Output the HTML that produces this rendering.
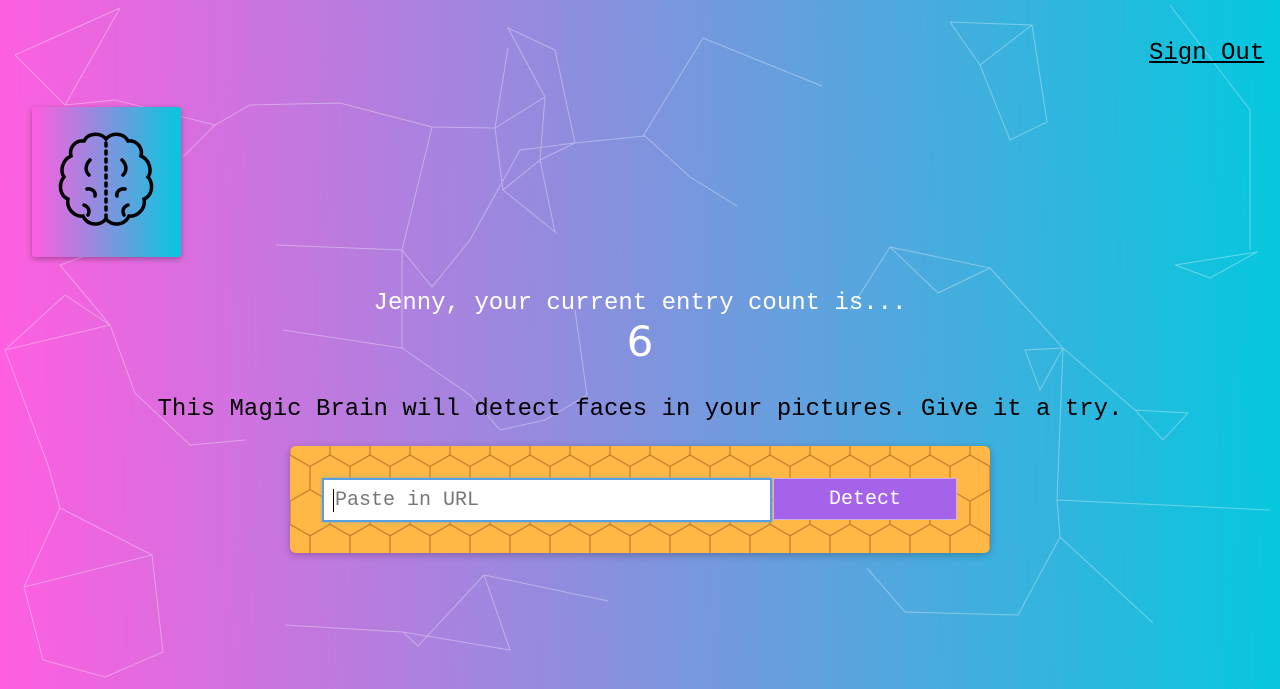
<!DOCTYPE html>
<html><head><meta charset="utf-8"><style>
body{margin:0;width:1280px;height:689px;overflow:hidden;background:linear-gradient(89deg,#ff5edf 0%,#04c8de 100%);font-family:"Liberation Mono",monospace;position:relative}
.net{position:absolute;left:0;top:0}
.so{position:absolute;left:1149px;top:40px;font-size:24px;color:#000;text-decoration:underline}
.logo{position:absolute;left:32px;top:107px;width:149px;height:150px;border-radius:3px;background:linear-gradient(90deg,#ff5edf,#04c8de);box-shadow:0 2px 6px rgba(0,0,0,.3)}
.t1{position:absolute;left:0;width:1280px;text-align:center;top:290px;font-size:24px;color:#fff}
.n{position:absolute;left:0;width:1280px;text-align:center;top:317px;font-size:42px;color:#fff;font-family:"DejaVu Sans",sans-serif}
.t2{position:absolute;left:0;width:1280px;text-align:center;top:396px;font-size:24px;color:#000}
.box{position:absolute;left:290px;top:446px;width:700px;height:107px;border-radius:6px;overflow:hidden;background:#ffb845;box-shadow:0 2px 8px rgba(0,0,0,.25)}
.in{position:absolute;left:322px;top:478px;width:446px;height:40px;background:#fff;border:2px solid #5b9ee0;box-shadow:0 0 3px #7ab}
.in span{position:absolute;left:9px;top:9px;font-size:20px;color:#777;border-left:1px solid #000;padding-left:1px}
.btn{position:absolute;left:773px;top:478px;width:184px;height:42px;background:#a463e8;border:1px solid #c8b0e8;box-sizing:border-box;color:#fff;font-size:20px;text-align:center;line-height:42px}
</style></head><body>
<svg class="net" width="1280" height="689" stroke="rgba(255,255,255,.35)" stroke-width="1" fill="none">
<path d="M120 8L65 105L115 100L215 125L250 105L340 103L432 127L495 128L545 97L508 28L555 50L575 143L645 136L690 177L737 206M508 48L495 128L503 190L540 160L555 232L503 190M545 97L540 160L575 143L520 150M643 136L703 38L822 86M432 127L402 250L432 287L470 240L520 150M402 250L402 348L470 395L500 430L545 420L587 395L575 310M276 245L402 250M283 330L402 348M215 125L183 157M65 105L15 55L65 105M120 8L15 55M950 22L1032 25L1047 122L1010 140L980 65L950 22M1032 25L980 65M1170 5L1250 110L1250 250M1175 265L1257 252L1210 278L1175 265M890 247L938 293L990 268L890 247L850 310M990 268L1063 348L1025 350L1040 390L1063 348L1135 410L1188 413L1163 440L1135 410M1063 348L1057 500L1060 537L1018 615L905 612L867 568M1057 500L1270 510M60 265L110 325L65 295L5 350L110 325L135 393L190 445L245 440M60 265L88 255M48 465L60 508L152 555L163 652L105 677L43 660L24 587L60 508M24 587L152 555M285 625L403 632L510 650L484 575L418 646L403 632M484 575L608 601M1060 537L1153 623M5 350L48 465"/>
</svg>
<div class="so">Sign Out</div>
<div class="logo"><svg width="149" height="150" viewBox="0 0 149 150" fill="none" stroke="#000" stroke-width="3.5" stroke-linecap="round">
<path d="M74 32C68 25 56 26 52 34C43 33 37 41 39 49C30 53 28 64 32 70C26 77 28 89 36 92C34 102 43 110 51 109C55 118 67 120 74 112C81 120 93 118 97 109C105 110 114 102 112 92C120 89 122 77 116 70C120 64 118 53 109 49C111 41 105 33 96 34C92 26 80 25 74 32Z"/>
<path d="M74 36V112" stroke-dasharray="3 5"/>
<path d="M58 53C53 58 53 64 57 68M90 53C95 58 95 64 91 68M55 82C60 81 64 85 63 89M93 82C88 81 84 85 85 89M52 98C57 100 58 104 56 108M96 98C91 100 90 104 92 108"/>
</svg></div>
<div class="t1">Jenny, your current entry count is...</div>
<div class="n">6</div>
<div class="t2">This Magic Brain will detect faces in your pictures. Give it a try.</div>
<div class="box"><svg width="700" height="107"><defs><pattern id="h" x="0" y="0" width="40" height="69.3" patternUnits="userSpaceOnUse"><path d="M0 0V9L20 20.5L40 9V0M20 20.5V43.6L0 55.1V69.3M20 43.6L40 55.1V69.3" stroke="#c8792b" stroke-width="1.2" fill="none"/></pattern></defs><rect width="700" height="107" fill="url(#h)"/></svg></div>
<div class="in"><span>Paste in URL</span></div>
<div class="btn">Detect</div>
</body></html>
